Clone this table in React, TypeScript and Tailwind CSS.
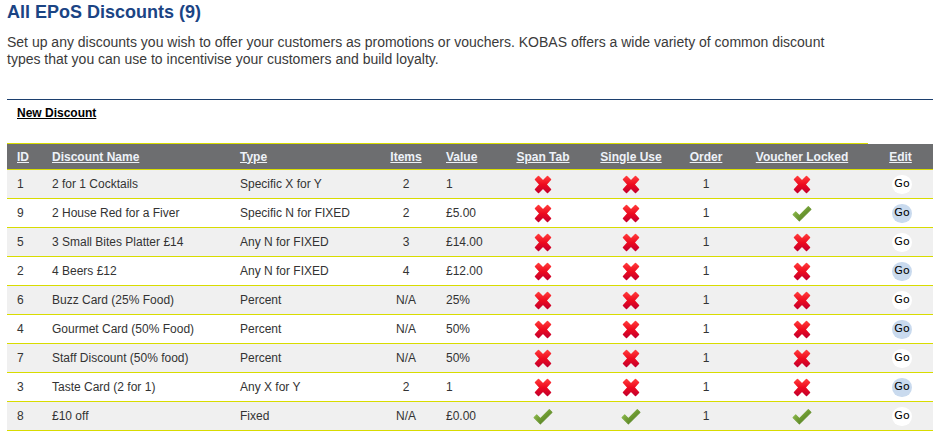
import React from 'react';

type Row = {
  id: number;
  name: string;
  type: string;
  items: string;
  value: string;
  spanTab: boolean;
  singleUse: boolean;
  order: number;
  voucherLocked: boolean;
};

const rows: Row[] = [
  { id: 1, name: '2 for 1 Cocktails', type: 'Specific X for Y', items: '2', value: '1', spanTab: false, singleUse: false, order: 1, voucherLocked: false },
  { id: 9, name: '2 House Red for a Fiver', type: 'Specific N for FIXED', items: '2', value: '£5.00', spanTab: false, singleUse: false, order: 1, voucherLocked: true },
  { id: 5, name: '3 Small Bites Platter £14', type: 'Any N for FIXED', items: '3', value: '£14.00', spanTab: false, singleUse: false, order: 1, voucherLocked: false },
  { id: 2, name: '4 Beers £12', type: 'Any N for FIXED', items: '4', value: '£12.00', spanTab: false, singleUse: false, order: 1, voucherLocked: false },
  { id: 6, name: 'Buzz Card (25% Food)', type: 'Percent', items: 'N/A', value: '25%', spanTab: false, singleUse: false, order: 1, voucherLocked: false },
  { id: 4, name: 'Gourmet Card (50% Food)', type: 'Percent', items: 'N/A', value: '50%', spanTab: false, singleUse: false, order: 1, voucherLocked: false },
  { id: 7, name: 'Staff Discount (50% food)', type: 'Percent', items: 'N/A', value: '50%', spanTab: false, singleUse: false, order: 1, voucherLocked: false },
  { id: 3, name: 'Taste Card (2 for 1)', type: 'Any X for Y', items: '2', value: '1', spanTab: false, singleUse: false, order: 1, voucherLocked: false },
  { id: 8, name: '£10 off', type: 'Fixed', items: 'N/A', value: '£0.00', spanTab: true, singleUse: true, order: 1, voucherLocked: true },
];

const cols = 'grid grid-cols-[35px_188px_146px_60px_64px_86px_90px_60px_132px_1fr]';

function Cross() {
  return (
    <svg width="18" height="19" viewBox="0 0 18 19">
      <defs>
        <linearGradient id="xg" x1="0" y1="0" x2="0" y2="1">
          <stop offset="0" stopColor="#ff3a3a" />
          <stop offset="0.5" stopColor="#ee0a1e" />
          <stop offset="1" stopColor="#c4002e" />
        </linearGradient>
      </defs>
      <polygon
        points="4.5,1.5 9,6 13.5,1.5 16.5,4.5 12,9.5 16.5,14.5 13.5,17.5 9,13 4.5,17.5 1.5,14.5 6,9.5 1.5,4.5"
        fill="url(#xg)"
        stroke="url(#xg)"
        strokeWidth="1.5"
        strokeLinejoin="round"
      />
    </svg>
  );
}

function Tick() {
  return (
    <svg width="20" height="17" viewBox="0 0 19 16">
      <defs>
        <linearGradient id="tg" x1="0" y1="0" x2="1" y2="1">
          <stop offset="0" stopColor="#9ccb5a" />
          <stop offset="0.5" stopColor="#6e9a32" />
          <stop offset="1" stopColor="#46701c" />
        </linearGradient>
      </defs>
      <polygon
        points="1,9 3.5,6.5 7,10 15.5,1.5 18,4 7,15"
        fill="url(#tg)"
        stroke="url(#tg)"
        strokeWidth="1"
        strokeLinejoin="round"
      />
    </svg>
  );
}

function Flag({ on }: { on: boolean }) {
  return <div className="flex items-center justify-center">{on ? <Tick /> : <Cross />}</div>;
}

export default function App() {
  return (
    <div className="min-h-[442px] bg-white pl-[7px] text-[#333] [font-family:'Liberation_Sans',Arial,sans-serif]">
      <h1 className="pt-[2px] text-[18px] leading-[21px] font-bold text-[#1b4484]">All EPoS Discounts (9)</h1>
      <p className="mt-[11px] w-[840px] text-[14px] leading-[17px] text-[#3a3a3a]">
        Set up any discounts you wish to offer your customers as promotions or vouchers. KOBAS offers a wide variety of common discount types that you can use to incentivise your customers and build loyalty.
      </p>

      <div className="mt-[31px] h-px bg-[#1c3f6e]" />

      <div className="pl-[10px] pt-0">
        <a href="#" className="text-[12px] leading-[15px] font-bold text-black underline">
          New Discount
        </a>
      </div>

      <div className="mt-[19px]">
        <div className={`${cols} h-[27px] items-stretch bg-[#6d6e70] text-[12px] font-bold text-[#eef2f8] border-b border-[#d8dc00]`}>
          {[
            ['ID', 'pl-[10px] text-left'],
            ['Discount Name', 'pl-[10px] text-left'],
            ['Type', 'pl-[10px] text-left'],
            ['Items', 'text-center'],
            ['Value', 'pl-[10px] text-left'],
            ['Span Tab', 'text-center'],
            ['Single Use', 'text-center'],
            ['Order', 'text-center'],
            ['Voucher Locked', 'text-center'],
          ].map(([label, align]) => (
            <div key={label} className={`${align} border-t border-[#d8dc00] flex items-center ${align.includes('center') ? 'justify-center' : ''}`}>
              <span className="underline">{label}</span>
            </div>
          ))}
          <div className="flex items-center justify-center border-t border-white bg-[#6d6e70]">
            <span className="underline">Edit</span>
          </div>
        </div>

        {rows.map((r, i) => {
          const shaded = i % 2 === 0;
          return (
            <div
              key={r.id}
              className={`${cols} h-[29px] items-center border-b border-[#d8dc00] text-[12px] ${shaded ? 'bg-[#f0f0f0]' : 'bg-white'}`}
            >
              <div className="pl-[10px]">{r.id}</div>
              <div className="pl-[10px]">{r.name}</div>
              <div className="pl-[10px]">{r.type}</div>
              <div className="text-center">{r.items}</div>
              <div className="pl-[10px]">{r.value}</div>
              <Flag on={r.spanTab} />
              <Flag on={r.singleUse} />
              <div className="text-center">{r.order}</div>
              <Flag on={r.voucherLocked} />
              <div className="flex justify-center pl-[3px]">
                <button
                  className={`flex h-[19px] w-[20px] items-center justify-center rounded-full text-[11px] text-black [font-family:'DejaVu_Sans',Tahoma,sans-serif] ${shaded ? 'bg-white' : 'bg-[#c9daee]'}`}
                >
                  Go
                </button>
              </div>
            </div>
          );
        })}
      </div>
    </div>
  );
}
